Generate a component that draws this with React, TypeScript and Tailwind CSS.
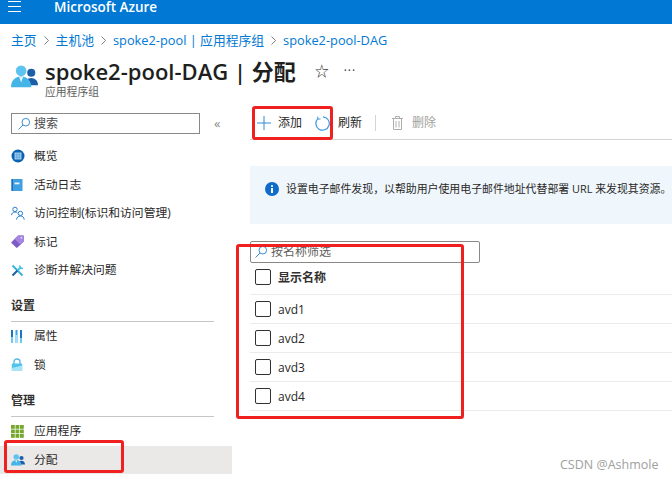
import type { ReactNode } from 'react';

const cjk = "font-['Open_Sans','Noto_Sans_CJK_SC',sans-serif]";

const OverviewIcon = () => (
  <svg width="14" height="14" viewBox="0 0 14 14">
    <circle cx="7" cy="7" r="6.5" fill="#0a63b0" />
    <rect x="3.6" y="3.6" width="6.8" height="6.8" fill="#cfe6f8" />
    <path d="M5.3 3.6v6.8M7 3.6v6.8M8.7 3.6v6.8M3.6 5.3h6.8M3.6 7h6.8M3.6 8.7h6.8" stroke="#2a86d0" strokeWidth="0.5" />
  </svg>
);

const LogIcon = () => (
  <svg width="12" height="12" viewBox="0 0 12 12">
    <rect x="0.5" y="0" width="11" height="12" fill="#3f9fe0" />
    <rect x="0.5" y="0" width="1.5" height="12" fill="#1c6fb8" />
    <rect x="3.5" y="3.5" width="5" height="1.8" fill="#e6f3fc" />
  </svg>
);

const AccessIcon = () => (
  <svg width="14" height="14" viewBox="0 0 14 14" fill="none" stroke="#2a7fd0" strokeWidth="1">
    <circle cx="4" cy="3.4" r="2.2" />
    <path d="M0.6 9.2c0-2 1.5-3.2 3.4-3.2 1 0 1.8.3 2.4.8" />
    <circle cx="9.4" cy="7.4" r="2.2" />
    <path d="M5.6 13.6c0-2.2 1.7-3.6 3.8-3.6s3.8 1.4 3.8 3.6" />
  </svg>
);

const TagIcon = () => (
  <svg width="13" height="13" viewBox="0 0 13 13">
    <path d="M0.4 7.2 7 0.6h5.4c.3 0 .4.2.4.4V6.4L6.2 12.8c-.3.2-.6.2-.8 0L.4 8c-.2-.2-.2-.6 0-.8z" fill="#7f5bc8" />
    <path d="M7 .6h5.4c.3 0 .4.2.4.4V6.4L9.4 9.6 3.6 4z" fill="#a586e0" />
    <circle cx="10.4" cy="2.8" r="0.9" fill="#e8def8" />
  </svg>
);

const WrenchIcon = () => (
  <svg width="13" height="13" viewBox="0 0 13 13" fill="none" strokeWidth="2">
    <path d="M1.500 1.500 11.500 11.500" stroke="#38b4e2" />
    <path d="M6.500 6.500 1.500 11.500" stroke="#1c5fa0" />
    <path d="M6.500 6.500 10 3" stroke="#45c6e8" />
    <path d="M8.500 1.500 9.500 4 12 4.500" stroke="#45c6e8" strokeWidth="1.500" />
  </svg>
);

const PropsIcon = () => (
  <svg width="11" height="13" viewBox="0 0 11 13">
    <rect x="0" y="0" width="2" height="13" fill="#1c74c0" />
    <rect x="0" y="7" width="2" height="6" fill="#6ecbf0" />
    <rect x="4.5" y="0" width="2" height="13" fill="#3aa0e0" />
    <rect x="4.5" y="5" width="2" height="8" fill="#a4e0f6" />
    <rect x="9" y="0" width="2" height="13" fill="#1c74c0" />
    <rect x="9" y="8" width="2" height="5" fill="#6ecbf0" />
  </svg>
);

const LockIcon = () => (
  <svg width="12" height="13" viewBox="0 0 12 13">
    <path d="M3 6V3.800C3 2 4.300 1 6 1s3 1 3 2.800V6" fill="none" stroke="#5ab8e4" strokeWidth="1.400" />
    <rect x="0.8" y="5.500" width="10.400" height="7.500" rx="1" fill="#4fc3ec" />
    <path d="M0.8 10 11.200 7.500V12c0 .6-.4 1-1 1H1.800c-.6 0-1-.4-1-1z" fill="#a8e4f8" />
  </svg>
);

const AppsIcon = () => (
  <svg width="13" height="13" viewBox="0 0 13 13" fill="#76a830">
    {[0, 4.5, 9].flatMap((y) =>
      [0, 4.5, 9].map((x) => <rect key={`${x}-${y}`} x={x} y={y} width="3.800" height="3.800" />),
    )}
  </svg>
);

const UsersIcon = ({ size }: { size: number }) => (
  <svg width={size} height={size * 0.86} viewBox="0 0 28 24">
    <circle cx="21" cy="8" r="4.200" fill="#1a5fa8" />
    <path d="M14 21c0-4.500 3-7.500 7-7.500s7 3 7 7.500z" fill="#1a5fa8" />
    <circle cx="10.500" cy="6" r="5.500" fill="#5cc4ee" />
    <path d="M0 23c0-6.500 4-11 10.500-11S21 16.500 21 23z" fill="#45b4e6" />
    <path d="M8.500 12.500h4L10.500 18z" fill="#e8f7fd" />
  </svg>
);

const SearchGlyph = () => (
  <svg width="14" height="14" viewBox="0 0 14 14" fill="none" stroke="#3c8fd6" strokeWidth="1">
    <circle cx="8.800" cy="5.200" r="3.800" />
    <path d="M6 8 1.500 12.500" />
  </svg>
);

const Crumb = () => (
  <svg width="5" height="9" viewBox="0 0 5 9" fill="none" stroke="#605e5c" strokeWidth="0.8">
    <path d="M.5 .5 4.500 4.500.5 8.500" />
  </svg>
);

const Row = ({ icon, label, active }: { icon: ReactNode; label: string; active?: boolean }) => (
  <div className={`flex h-[28.500px] items-center pl-[11px] ${active ? 'bg-[#ebe9e8]' : ''}`}>
    <span className="flex w-[23px] shrink-0 items-center">{icon}</span>
    <span className="text-[11.800px] whitespace-nowrap text-[#292827]">{label}</span>
  </div>
);

const SectionTitle = ({ label }: { label: string }) => (
  <div className="ml-[11px] mr-[18px] border-b border-[#c8c6c4] pb-[6px] text-[12px] leading-[18px] font-semibold text-[#323130]">
    {label}
  </div>
);

const Sidebar = () => (
  <aside className="w-[232px] shrink-0">
    <div className="flex h-[37px] items-start gap-[14px] pl-[11px] pt-[8px]">
      <div className="flex h-[21px] w-[189px] items-center gap-[3px] border border-[#8a8886] pl-[5px] pr-2 text-[12px] text-[#4a4a4a]">
        <SearchGlyph />
        搜索
      </div>
      <span className="text-[13px] leading-[21px] text-[#8a8886]">«</span>
    </div>
    <div>
      <Row icon={<OverviewIcon />} label="概览" />
      <Row icon={<LogIcon />} label="活动日志" />
      <Row icon={<AccessIcon />} label="访问控制(标识和访问管理)" />
      <Row icon={<TagIcon />} label="标记" />
      <Row icon={<WrenchIcon />} label="诊断并解决问题" />
    </div>
    <div className="mt-[12.500px]">
      <SectionTitle label="设置" />
      <Row icon={<PropsIcon />} label="属性" />
      <Row icon={<LockIcon />} label="锁" />
    </div>
    <div className="mt-[13px]">
      <SectionTitle label="管理" />
      <Row icon={<AppsIcon />} label="应用程序" />
      <Row icon={<UsersIcon size={14} />} label="分配" active />
    </div>
  </aside>
);

const Checkbox = () => <span className="block h-[16px] w-[16px] shrink-0 rounded-[2px] border border-[#323130]" />;

const TableRow = ({ label, header }: { label: string; header?: boolean }) => (
  <div className={`flex items-center gap-[7px] border-b border-[#edebe9] pl-[5px] ${header ? 'h-[32px] pb-[3px]' : 'h-[29px]'}`}>
    <Checkbox />
    <span className={`pt-[1px] text-[12px] ${header ? 'font-bold text-[#323130]' : 'text-[#292827]'}`}>{label}</span>
  </div>
);

const Toolbar = () => (
  <div className="flex h-[35px] items-center border-b border-[#d6d4d2] pt-[2px] text-[12px]">
    <svg className="ml-[7px]" width="14" height="14" viewBox="0 0 14 14" stroke="#2f8ad6" strokeWidth="1">
      <path d="M7 0v14M0 7h14" />
    </svg>
    <span className="ml-[7px] text-[#292827]">添加</span>
    <svg className="ml-[13px]" width="15" height="15" viewBox="0 0 15 15" fill="none" stroke="#3a9ae0" strokeWidth="1.200">
      <path d="M8 .8A6.700 6.700 0 1 1 3 2.600" />
      <path d="M2.800 .5V3h2.700" strokeWidth="1" />
    </svg>
    <span className="ml-[8px] text-[#292827]">刷新</span>
    <span className="ml-[13px] h-[16px] w-px bg-[#d6d4d2]" />
    <svg className="ml-[16px]" width="11" height="14" viewBox="0 0 11 14" fill="none" stroke="#b0aeac" strokeWidth="1">
      <path d="M0 2.500h11M3.500 2.500V.500h4v2M1.500 2.500v11h8v-11M4 5v6.500M7 5v6.500" />
    </svg>
    <span className="ml-[9px] text-[#a19f9d]">删除</span>
  </div>
);

const Content = () => (
  <main className="min-w-0 flex-1 overflow-hidden pl-[18px]">
    <Toolbar />
    <div className="mt-[26px] flex h-[58px] items-start bg-[#eff6fc] pl-[15px] pt-[16px]">
      <svg className="shrink-0" width="14" height="14" viewBox="0 0 14 14">
        <circle cx="7" cy="7" r="7" fill="#0f6cc9" />
        <rect x="6" y="6" width="2" height="5" fill="#fff" />
        <circle cx="7" cy="4" r="1.100" fill="#fff" />
      </svg>
      <span className="ml-[7px] text-[10.900px] leading-[14px] whitespace-nowrap text-[#292827]">
        设置电子邮件发现，以帮助用户使用电子邮件地址代替部署 URL 来发现其资源。
      </span>
    </div>
    <div className="mt-[17px] flex h-[22px] w-[230px] items-center gap-[3px] rounded-[2px] border border-[#8a8886] pl-[3px] text-[12px] text-[#605e5c]">
      <SearchGlyph />
      按名称筛选
    </div>
    <TableRow label="显示名称" header />
    <TableRow label="avd1" />
    <TableRow label="avd2" />
    <TableRow label="avd3" />
    <TableRow label="avd4" />
  </main>
);

export default function App() {
  return (
    <div className={`relative h-[479px] w-[672px] overflow-hidden bg-white ${cjk}`}>
      <header className="flex h-[24px] items-center overflow-hidden bg-[#0078d4] text-white">
        <svg className="ml-[8px] -mt-[11px]" width="13" height="11" viewBox="0 0 13 11" stroke="#fff" strokeWidth="1">
          <path d="M0 .500h13M0 5.500h13M0 10.500h13" />
        </svg>
        <span className="ml-[33px] -mt-[11px] text-[13.500px] leading-[20px] font-semibold">Microsoft Azure</span>
      </header>
      <nav className="flex h-[30px] items-center gap-[7px] pl-[11px] pt-[3px] text-[12.800px] text-[#0078d4]">
        <span>主页</span>
        <Crumb />
        <span>主机池</span>
        <Crumb />
        <span>spoke2-pool | 应用程序组</span>
        <Crumb />
        <span>spoke2-pool-DAG</span>
      </nav>
      <div className="flex h-[45px] items-center pl-[11px]">
        <UsersIcon size={27} />
        <div className="ml-[7px] flex flex-col">
          <div className="flex items-center">
            <h1 className="text-[22px] leading-[30px] font-semibold text-[#201f1e]">spoke2-pool-DAG | 分配</h1>
            <span className="ml-[19px] text-[14px] leading-[30px] text-[#323130]">☆</span>
            <span className="ml-[15px] text-[12px] leading-[24px] tracking-[1px] text-[#323130]">···</span>
          </div>
          <span className="text-[10.800px] leading-[12px] text-[#605e5c]">应用程序组</span>
        </div>
      </div>
      <div className="flex pt-[6px]">
        <Sidebar />
        <Content />
      </div>
      <div className="pointer-events-none absolute top-[106px] left-[252px] h-[34px] w-[81px] rounded-[3px] border-[3px] border-[#f02020]" />
      <div className="pointer-events-none absolute top-[244px] left-[236px] h-[175px] w-[228px] rounded-[3px] border-[3px] border-[#f02020]" />
      <div className="pointer-events-none absolute top-[440px] left-[4px] h-[33px] w-[120px] rounded-[3px] border-[3px] border-[#f02020]" />
      <span className="absolute top-[456px] left-[560px] text-[12.500px] text-[#a0a0a0]">CSDN @Ashmole</span>
    </div>
  );
}
